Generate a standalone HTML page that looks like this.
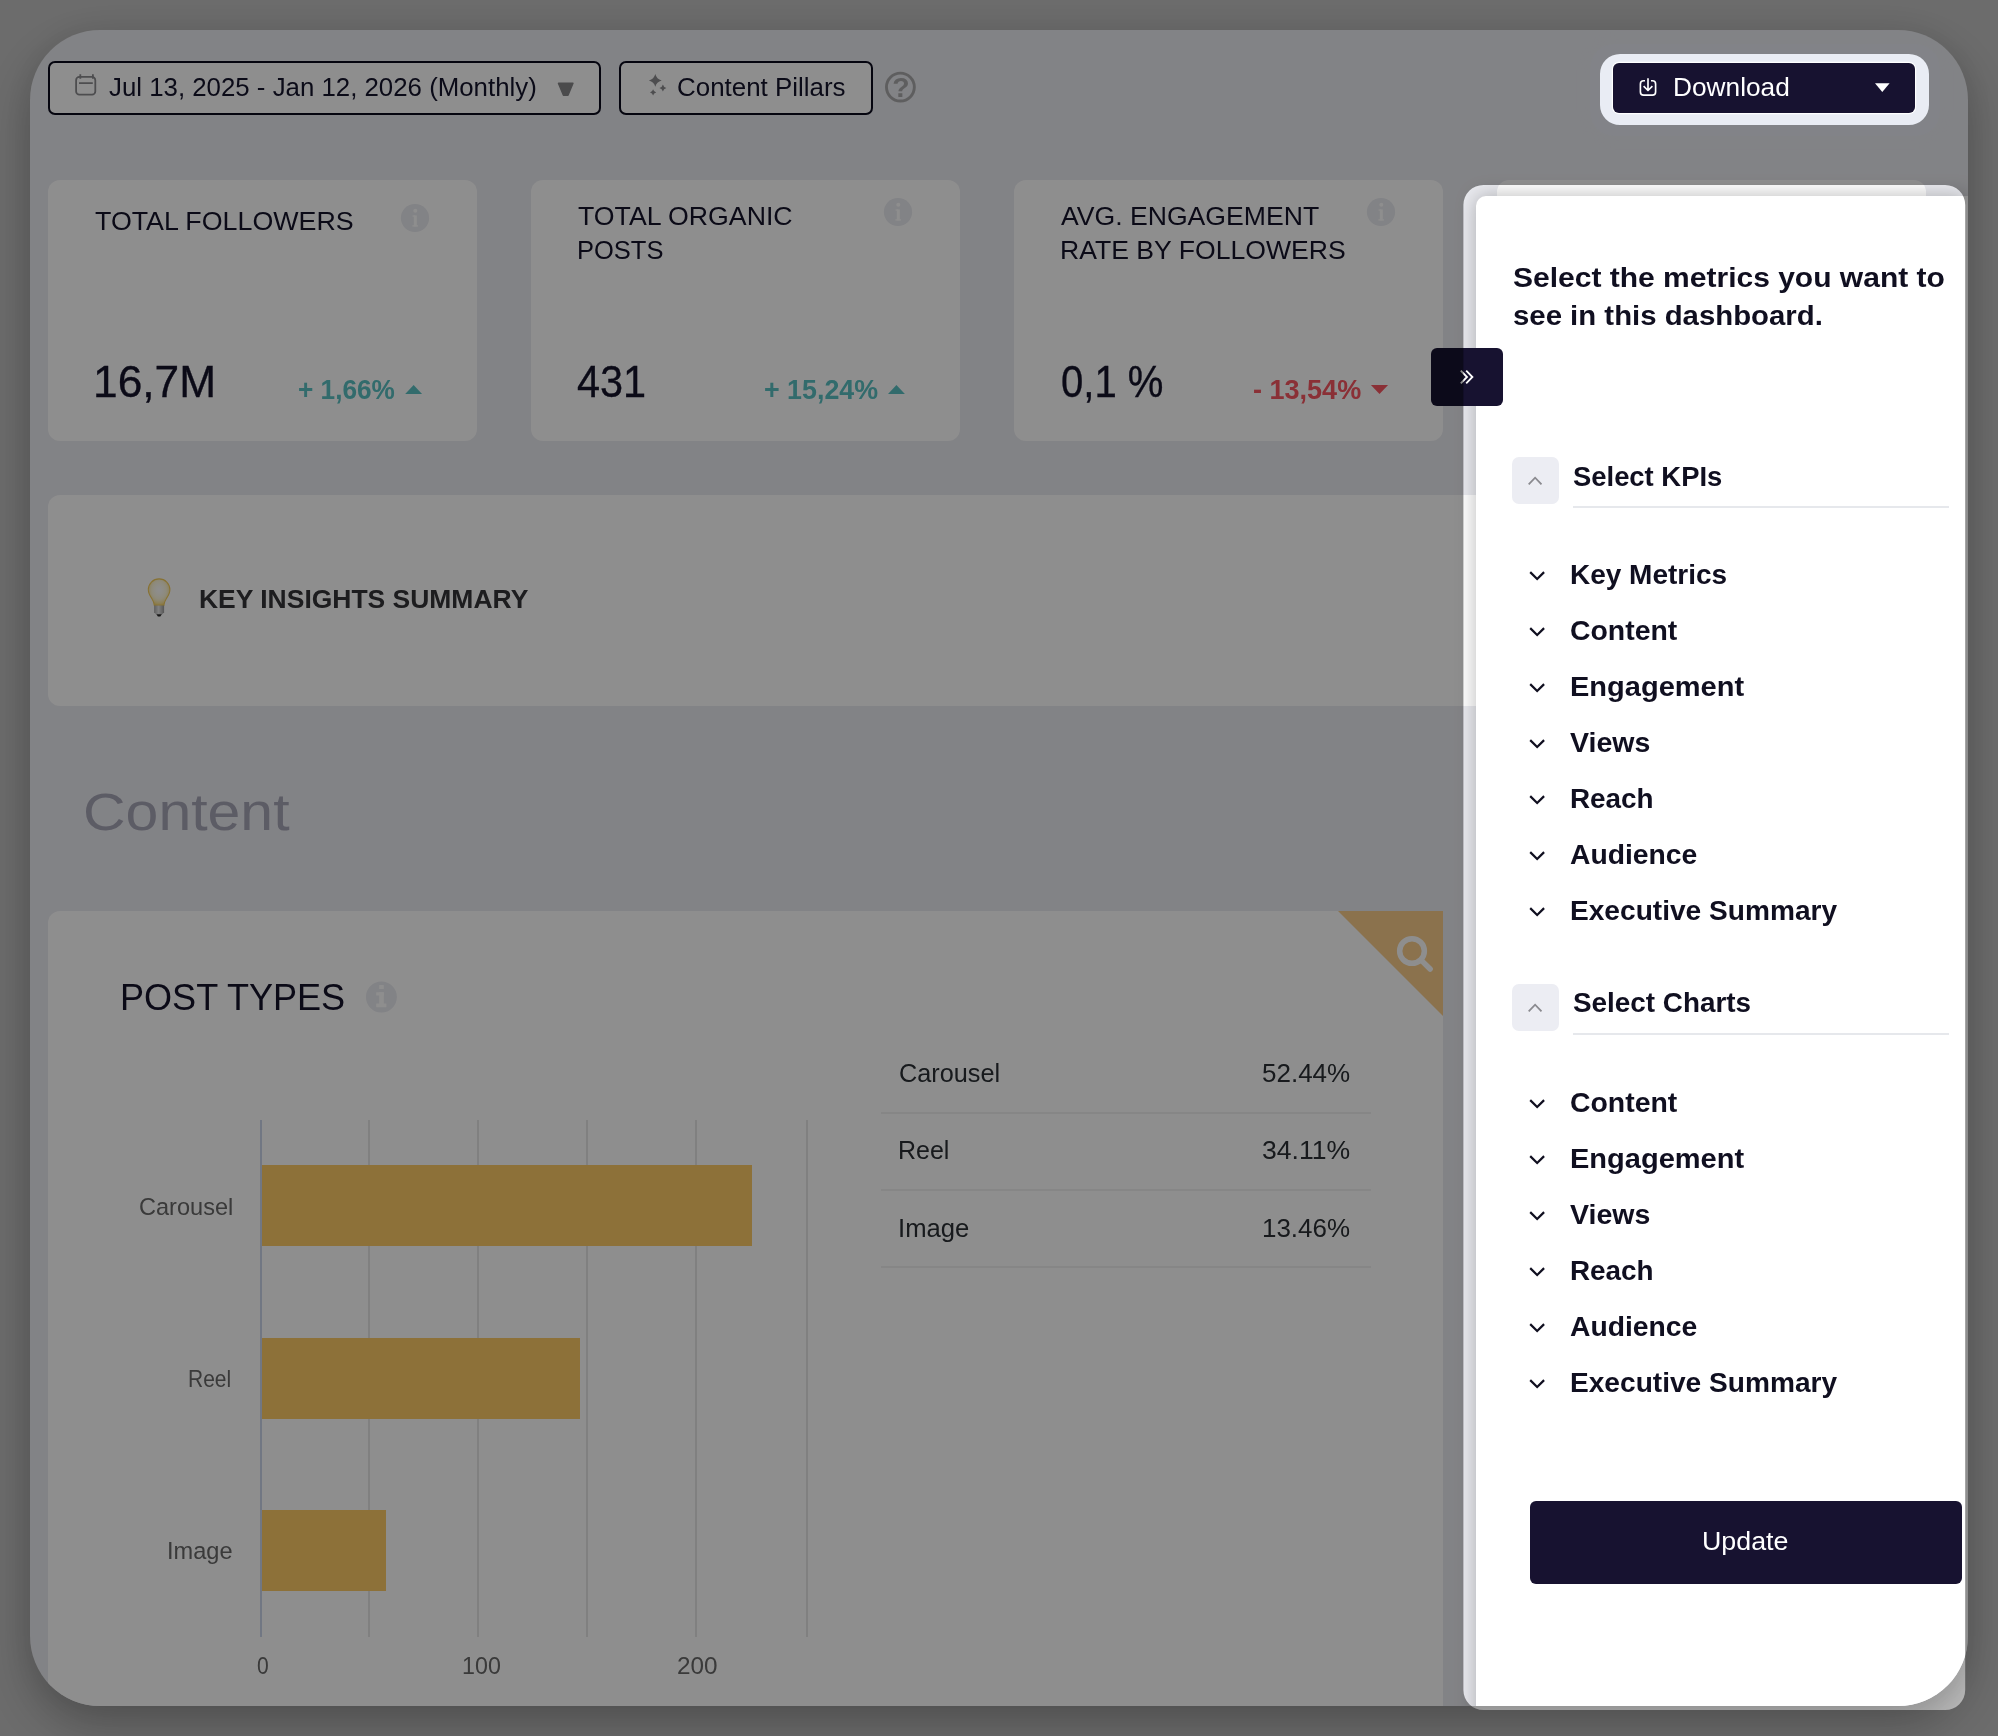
<!DOCTYPE html>
<html lang="en">
<head>
<meta charset="utf-8">
<title>Dashboard</title>
<style>
*{box-sizing:border-box;margin:0;padding:0}
html,body{width:1998px;height:1736px;overflow:hidden}
body{background:#c3c3c3;font-family:"Liberation Sans",sans-serif;position:relative}
.abs{position:absolute}
.t{position:absolute;white-space:nowrap;line-height:1;transform-origin:0 0;font-family:"Liberation Sans",sans-serif}
/* main rounded container; children use page coordinates via .pg offset */
#wrap{position:absolute;left:30px;top:30px;width:1938px;height:1676px;border-radius:70px;background:#eaebf0;
  box-shadow:0 20px 50px rgba(0,0,0,.26), 0 0 30px rgba(0,0,0,.05)}
#clip{position:absolute;left:0;top:0;width:1938px;height:1676px;border-radius:70px;overflow:hidden;will-change:transform}
.pg{position:absolute;left:-30px;top:-30px;width:1998px;height:1736px}
.card{position:absolute;background:#fff;border-radius:12px}
.btn-o{position:absolute;border:2.2px solid #0a0a1c;border-radius:7px;background:#fff}
.dark{position:absolute;background:#171230;border-radius:6px}
.grid{position:absolute;top:1120px;width:2px;height:516.5px;background:#e6e6e6}
.bar{position:absolute;left:261.9px;height:81px;background:#fecc67}
.row{position:absolute;left:881px;width:490px;height:2px;background:#f0f0f1}
#ov{position:absolute;left:0;top:0;width:1998px;height:1736px;pointer-events:none}
</style>
</head>
<body>
<div id="wrap"><div id="clip"><div class="pg">

  <!-- toolbar -->
  <div class="abs" style="left:1590px;top:44px;width:350px;height:92px;background:#e9ecf4;border-radius:24px;box-shadow:0 0 10px 6px #eaebf0"></div>
  <div class="btn-o" style="left:48px;top:61px;width:553px;height:54px"></div>
  <div class="btn-o" style="left:619px;top:61px;width:253.9px;height:54px"></div>
  <div class="dark" style="left:1613px;top:63px;width:302px;height:50px;box-shadow:0 0 0 1.2px #fff"></div>

  <!-- KPI cards -->
  <div class="card" style="left:48px;top:180px;width:429px;height:261px"></div>
  <div class="card" style="left:531px;top:180px;width:429.3px;height:261px"></div>
  <div class="card" style="left:1014.3px;top:180px;width:429px;height:261px"></div>
  <div class="card" style="left:1497px;top:180px;width:428.5px;height:261px"></div>

  <!-- key insights -->
  <div class="card" style="left:48px;top:495px;width:1878px;height:211px"></div>

  <!-- post types -->
  <div class="card" style="left:48px;top:911px;width:1395px;height:820px;border-top-right-radius:2px"></div>
  <div class="abs" style="left:1337.6px;top:911px;width:0;height:0;border-top:105px solid #facd8b;border-left:105.4px solid transparent"></div>
  <div class="grid" style="left:368.4px"></div>
  <div class="grid" style="left:477.3px"></div>
  <div class="grid" style="left:586.1px"></div>
  <div class="grid" style="left:694.9px"></div>
  <div class="grid" style="left:805.9px"></div>
  <div class="grid" style="left:259.5px;width:2.4px;background:#ccd6eb"></div>
  <div class="bar" style="top:1165.3px;width:490.5px"></div>
  <div class="bar" style="top:1337.6px;width:318.2px"></div>
  <div class="bar" style="top:1510.2px;width:124.1px"></div>
  <div class="row" style="top:1111.7px"></div>
  <div class="row" style="top:1189px"></div>
  <div class="row" style="top:1265.8px"></div>

  
  <svg class="abs" style="left:0;top:0" width="1998" height="1736" viewBox="0 0 1998 1736">
    <!-- calendar -->
    <g fill="none" stroke="#8b8b8e" stroke-width="1.8">
      <rect x="76.1" y="76.9" width="19.2" height="17.8" rx="3.3"/>
      <path d="M80.3 74.2V78.8M92.9 74.2V78.8M79 83.05H92.8"/>
    </g>
    <!-- date caret -->
    <path d="M558.4 83.3H573.0L568.0 95.2H563.4Z" fill="#878789" stroke="#878789" stroke-width="1.4" stroke-linejoin="round"/>
    <!-- sparkles -->
    <g fill="#8b8b8e"><path d="M655.30 74.00Q656.58 79.12 661.70 80.40Q656.58 81.68 655.30 86.80Q654.02 81.68 648.90 80.40Q654.02 79.12 655.30 74.00Z"/><path d="M662.90 84.50Q663.60 87.30 666.40 88.00Q663.60 88.70 662.90 91.50Q662.20 88.70 659.40 88.00Q662.20 87.30 662.90 84.50Z"/><path d="M653.10 89.30Q653.72 91.78 656.20 92.40Q653.72 93.02 653.10 95.50Q652.48 93.02 650.00 92.40Q652.48 91.78 653.10 89.30Z"/></g>
    <!-- help -->
    <circle cx="900.4" cy="87.1" r="13.95" fill="none" stroke="#aaaaab" stroke-width="2.9"/>
    <text x="900.9" y="96.9" text-anchor="middle" font-family="Liberation Sans, sans-serif" font-weight="700" font-size="28.4" fill="#aaaaab">?</text>
    <!-- download icon -->
    <g fill="none" stroke="#fff" stroke-width="1.65" stroke-linejoin="round">
      <path d="M1645 80.7H1643.6a3.2 3.2 0 0 0 -3.2 3.2V91.9a3.2 3.2 0 0 0 3.2 3.2H1652.4a3.2 3.2 0 0 0 3.2 -3.2V83.9a3.2 3.2 0 0 0 -3.2 -3.2H1651"/>
      <path d="M1648 78.2V90.4M1643.6 86.1L1648 90.5L1652.4 86.1"/>
    </g>
    <path d="M1875 83.3H1889.6L1882.3 92.1Z" fill="#fff"/>
    <!-- info icons -->
    <circle cx="415" cy="218" r="14.1" fill="#eaebf0"/><g fill="#fff"><circle cx="415.30" cy="210.85" r="2.01"/><rect x="413.79" y="215.38" width="3.02" height="10.98"/><rect x="412.58" y="215.38" width="2.42" height="1.31"/><rect x="412.38" y="225.25" width="5.64" height="1.31"/></g><circle cx="898" cy="212" r="14.1" fill="#eaebf0"/><g fill="#fff"><circle cx="898.30" cy="204.85" r="2.01"/><rect x="896.79" y="209.38" width="3.02" height="10.98"/><rect x="895.58" y="209.38" width="2.42" height="1.31"/><rect x="895.38" y="219.25" width="5.64" height="1.31"/></g><circle cx="1381" cy="212" r="14.1" fill="#eaebf0"/><g fill="#fff"><circle cx="1381.30" cy="204.85" r="2.01"/><rect x="1379.79" y="209.38" width="3.02" height="10.98"/><rect x="1378.58" y="209.38" width="2.42" height="1.31"/><rect x="1378.38" y="219.25" width="5.64" height="1.31"/></g><circle cx="381.4" cy="997" r="15.45" fill="#eaebf0"/><g fill="#fff"><rect x="379.2" y="985" width="4.6" height="4.1" rx="0.4"/><rect x="376.2" y="992.2" width="7.6" height="3.4" rx="0.4"/><rect x="379.2" y="992.2" width="4.6" height="12" /><rect x="376.2" y="1003.4" width="10.2" height="3.9" rx="0.4"/></g>
    <!-- trend triangles -->
    <path d="M405.2 394L413.65 385L422.1 394Z" fill="#5ac1c3"/>
    <path d="M888.0 394L896.45 385L904.9 394Z" fill="#5ac1c3"/>
    <path d="M1370.9 385H1388.1L1379.5 394Z" fill="#f85661"/>
    <!-- bulb -->
    <defs>
      <radialGradient id="bg" cx="0.5" cy="0.42" r="0.62">
        <stop offset="0" stop-color="#fffdf0" stop-opacity="0.15"/>
        <stop offset="0.55" stop-color="#fdeeb0" stop-opacity="0.45"/>
        <stop offset="1" stop-color="#f7cf55"/>
      </radialGradient>
      <linearGradient id="bs" x1="0" x2="1"><stop offset="0" stop-color="#a9a9a9"/><stop offset="0.45" stop-color="#e6e6e6"/><stop offset="1" stop-color="#9a9a9a"/></linearGradient>
    </defs>
    <path transform="translate(159.1 605.4) scale(0.955 0.965) translate(-159.1 -605.4)" d="M159.1 577.9c-6.3 0-11.3 5-11.3 11.2c0 3.6 1.8 6.3 3.5 8.9c1.4 2.2 2.6 4.4 2.8 7.4h10c0.2-3 1.4-5.2 2.8-7.4c1.7-2.6 3.5-5.3 3.5-8.9c0-6.2-5-11.2-11.3-11.2z" fill="url(#bg)" stroke="#f3cc5c" stroke-width="1.1"/>
    <path d="M154.1 605.6h10v6.6l-2.2 2.2h-5.6l-2.2-2.2z" fill="url(#bs)"/>
    <path d="M156.4 614.2h5.4l-1.5 2.3h-2.4z" fill="#2a2a2a"/>
    <!-- magnifier -->
    <g fill="none" stroke="#fff" stroke-width="5.5" stroke-linecap="round">
      <circle cx="1412" cy="951" r="12.35"/>
      <path d="M1421.6 960.6L1430.1 969.0"/>
    </g>
  </svg>

  <span class="t" style="left:109.30px;top:75.35px;font-size:25.58px;color:#15142c;transform:scaleX(1.0095)">Jul 13, 2025 - Jan 12, 2026 (Monthly)</span>
<span class="t" style="left:676.80px;top:75.10px;font-size:25.87px;color:#15142c;transform:scaleX(1.0022)">Content Pillars</span>
<span class="t" style="left:1673.39px;top:73.86px;font-size:26.16px;color:#ffffff;transform:scaleX(1.0038)">Download</span>
<span class="t" style="left:94.60px;top:207.81px;font-size:26.45px;color:#14132a;transform:scaleX(1.0138)">TOTAL FOLLOWERS</span>
<span class="t" style="left:578.00px;top:203.01px;font-size:26.45px;color:#14132a;transform:scaleX(1.0099)">TOTAL ORGANIC</span>
<span class="t" style="left:576.97px;top:237.01px;font-size:26.45px;color:#14132a;transform:scaleX(0.9646)">POSTS</span>
<span class="t" style="left:1061.00px;top:203.01px;font-size:26.45px;color:#14132a;transform:scaleX(1.0061)">AVG. ENGAGEMENT</span>
<span class="t" style="left:1059.89px;top:237.01px;font-size:26.45px;color:#14132a;transform:scaleX(1.0058)">RATE BY FOLLOWERS</span>
<span class="t" style="left:92.55px;top:358.66px;font-size:45.06px;-webkit-text-stroke:0.35px #14132a;color:#14132a;transform:scaleX(0.9834)">16,7M</span>
<span class="t" style="left:577.08px;top:358.66px;font-size:45.06px;-webkit-text-stroke:0.35px #14132a;color:#14132a;transform:scaleX(0.9195)">431</span>
<span class="t" style="left:1060.81px;top:358.66px;font-size:45.06px;-webkit-text-stroke:0.35px #14132a;color:#14132a;transform:scaleX(0.8892)">0,1 %</span>
<span class="t" style="left:297.94px;top:375.77px;font-size:27.33px;font-weight:700;color:#5ac1c3;transform:scaleX(0.9585)">+ 1,66%</span>
<span class="t" style="left:764.22px;top:375.77px;font-size:27.33px;font-weight:700;color:#5ac1c3;transform:scaleX(0.9814)">+ 15,24%</span>
<span class="t" style="left:1252.81px;top:375.77px;font-size:27.33px;font-weight:700;color:#f85661;transform:scaleX(0.9891)">- 13,54%</span>
<span class="t" style="left:198.59px;top:585.86px;font-size:26.16px;font-weight:700;color:#343438;transform:scaleX(1.0115)">KEY INSIGHTS SUMMARY</span>
<span class="t" style="left:83.03px;top:786.16px;font-size:52.03px;color:#a6a5b6;transform:scaleX(1.1337)">Content</span>
<span class="t" style="left:119.51px;top:979.26px;font-size:37.5px;color:#14132a;transform:scaleX(0.9617)">POST TYPES</span>
<span class="t" style="left:139.24px;top:1195.61px;font-size:23.26px;color:#686868;transform:scaleX(1.0129)">Carousel</span>
<span class="t" style="left:188.10px;top:1368.31px;font-size:23.26px;color:#686868;transform:scaleX(0.9025)">Reel</span>
<span class="t" style="left:166.77px;top:1540.32px;font-size:23.26px;color:#686868;transform:scaleX(1.0148)">Image</span>
<span class="t" style="left:256.50px;top:1655.32px;font-size:23.26px;color:#686868;transform:scaleX(0.9077)">0</span>
<span class="t" style="left:461.50px;top:1655.31px;font-size:23.26px;color:#686868;transform:scaleX(1.0010)">100</span>
<span class="t" style="left:677.35px;top:1655.30px;font-size:23.26px;color:#686868;transform:scaleX(1.0459)">200</span>
<span class="t" style="left:898.93px;top:1059.86px;font-size:26.16px;color:#2b3035;transform:scaleX(0.9663)">Carousel</span>
<span class="t" style="left:898.29px;top:1137.06px;font-size:26.16px;color:#2b3035;transform:scaleX(0.9552)">Reel</span>
<span class="t" style="left:898.44px;top:1214.86px;font-size:26.16px;color:#2b3035;transform:scaleX(0.9808)">Image</span>
<span class="t" style="left:1262.21px;top:1059.86px;font-size:26.16px;color:#2b3035;transform:scaleX(0.9937)">52.44%</span>
<span class="t" style="left:1262.18px;top:1137.06px;font-size:26.16px;color:#2b3035;transform:scaleX(1.0162)">34.11%</span>
<span class="t" style="left:1262.32px;top:1214.86px;font-size:26.16px;color:#2b3035;transform:scaleX(0.9924)">13.46%</span>

  <!-- side panel -->
  <div class="abs" id="panel" style="left:1476px;top:195.8px;width:492px;height:1560px;background:#fff;border-radius:10px 0 0 0;
     box-shadow:-1px -1px 20px rgba(0,0,0,.26)"></div>
  <div class="dark" style="left:1431px;top:348px;width:71.8px;height:58px"></div>
  <div class="abs" style="left:1512px;top:457px;width:47px;height:47px;border-radius:7px;background:#ecedf3"></div>
  <div class="abs" style="left:1512px;top:984px;width:47px;height:47px;border-radius:7px;background:#ecedf3"></div>
  <div class="abs" style="left:1573px;top:506px;width:376px;height:2px;background:#e6e8ec"></div>
  <div class="abs" style="left:1573px;top:1032.7px;width:376px;height:2px;background:#e6e8ec"></div>
  <div class="dark" style="left:1530px;top:1501px;width:432px;height:83px"></div>
  
  <svg class="abs" style="left:0;top:0" width="1998" height="1736" viewBox="0 0 1998 1736">
    <g fill="none" stroke="#fff" stroke-width="1.85"><path d="M1460.8 370.7L1467.0 377.0L1460.8 383.3M1466.2 370.7L1472.4 377.0L1466.2 383.3"/></g>
    <g fill="none" stroke="#8a8a8f" stroke-width="1.8"><path d="M1528.7 484.3L1535.1 477.7L1541.5 484.3M1528.7 1011.3L1535.1 1004.7L1541.5 1011.3"/></g>
    <g fill="none" stroke="#100f20" stroke-width="2.2"><path d="M1530.2 572.1L1537.15 579.0L1544.1 572.1M1530.2 628.1L1537.15 635.0L1544.1 628.1M1530.2 684.1L1537.15 691.0L1544.1 684.1M1530.2 740.1L1537.15 747.0L1544.1 740.1M1530.2 796.1L1537.15 803.0L1544.1 796.1M1530.2 852.1L1537.15 859.0L1544.1 852.1M1530.2 908.1L1537.15 915.0L1544.1 908.1M1530.2 1100.1L1537.15 1107.0L1544.1 1100.1M1530.2 1156.1L1537.15 1163.0L1544.1 1156.1M1530.2 1212.1L1537.15 1219.0L1544.1 1212.1M1530.2 1268.1L1537.15 1275.0L1544.1 1268.1M1530.2 1324.1L1537.15 1331.0L1544.1 1324.1M1530.2 1380.1L1537.15 1387.0L1544.1 1380.1"/></g>
  </svg>

  <span class="t" style="left:1512.80px;top:263.79px;font-size:27.18px;font-weight:700;color:#100f20;transform:scaleX(1.1043)">Select the metrics you want to</span>
<span class="t" style="left:1512.80px;top:301.79px;font-size:27.18px;font-weight:700;color:#100f20;transform:scaleX(1.0801)">see in this dashboard.</span>
<span class="t" style="left:1573.10px;top:463.02px;font-size:27.62px;font-weight:700;color:#100f20;transform:scaleX(0.9924)">Select KPIs</span>
<span class="t" style="left:1573.10px;top:988.82px;font-size:27.62px;font-weight:700;color:#100f20;transform:scaleX(1.0090)">Select Charts</span>
<span class="t" style="left:1569.85px;top:561.56px;font-size:26.74px;font-weight:700;color:#100f20;transform:scaleX(1.0465)">Key Metrics</span>
<span class="t" style="left:1569.84px;top:617.56px;font-size:26.74px;font-weight:700;color:#100f20;transform:scaleX(1.0623)">Content</span>
<span class="t" style="left:1569.81px;top:673.56px;font-size:26.74px;font-weight:700;color:#100f20;transform:scaleX(1.0851)">Engagement</span>
<span class="t" style="left:1570.30px;top:729.56px;font-size:26.74px;font-weight:700;color:#100f20;transform:scaleX(1.0666)">Views</span>
<span class="t" style="left:1569.86px;top:785.56px;font-size:26.74px;font-weight:700;color:#100f20;transform:scaleX(1.0422)">Reach</span>
<span class="t" style="left:1570.30px;top:841.56px;font-size:26.74px;font-weight:700;color:#100f20;transform:scaleX(1.0581)">Audience</span>
<span class="t" style="left:1569.85px;top:897.56px;font-size:26.74px;font-weight:700;color:#100f20;transform:scaleX(1.0512)">Executive Summary</span>
<span class="t" style="left:1569.84px;top:1089.56px;font-size:26.74px;font-weight:700;color:#100f20;transform:scaleX(1.0623)">Content</span>
<span class="t" style="left:1569.81px;top:1145.56px;font-size:26.74px;font-weight:700;color:#100f20;transform:scaleX(1.0851)">Engagement</span>
<span class="t" style="left:1570.30px;top:1201.56px;font-size:26.74px;font-weight:700;color:#100f20;transform:scaleX(1.0666)">Views</span>
<span class="t" style="left:1569.86px;top:1257.56px;font-size:26.74px;font-weight:700;color:#100f20;transform:scaleX(1.0422)">Reach</span>
<span class="t" style="left:1570.30px;top:1313.56px;font-size:26.74px;font-weight:700;color:#100f20;transform:scaleX(1.0581)">Audience</span>
<span class="t" style="left:1569.85px;top:1369.56px;font-size:26.74px;font-weight:700;color:#100f20;transform:scaleX(1.0512)">Executive Summary</span>
<span class="t" style="left:1702.15px;top:1527.66px;font-size:26.16px;color:#ffffff;transform:scaleX(1.0245)">Update</span>

</div></div></div>

<!-- tour overlay with two spotlight holes -->
<svg id="ov" viewBox="0 0 1998 1736">
  <path fill="#000" fill-opacity="0.443" fill-rule="evenodd" d="M0 0H1998V1736H0Z
   M1620 54H1909a20 20 0 0 1 20 20V105a20 20 0 0 1 -20 20H1620a20 20 0 0 1 -20 -20V74a20 20 0 0 1 20 -20Z
   M1483.4 185H1945.2a20 20 0 0 1 20 20V1690a20 20 0 0 1 -20 20H1483.4a20 20 0 0 1 -20 -20V205a20 20 0 0 1 20 -20Z"/>
</svg>
</body>
</html>
